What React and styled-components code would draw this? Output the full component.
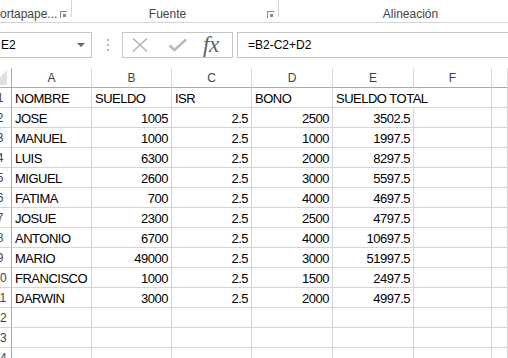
import React from 'react';
import styled, { createGlobalStyle } from 'styled-components';

const GlobalStyle = createGlobalStyle`
  body {
    margin: 0;
    background: #ffffff;
    overflow: hidden;
    font-family: "Liberation Sans", Arial, sans-serif;
  }
`;

const Page = styled.div`
  width: 508px;
  height: 358px;
  overflow: hidden;
  background: #ffffff;
`;

// ribbon (only the bottom labels are visible)
const Ribbon = styled.div`
  display: flex;
  height: 22px;
  border-bottom: 1px solid #d5d5d5;
`;
const RibbonGroup = styled.div`
  position: relative;
  display: flex;
  align-items: center;
  justify-content: ${(props) => (props.$left ? 'flex-start' : 'center')};
  width: ${(props) => props.$width || 'auto'};
  flex: ${(props) => (props.$width ? 'none' : '1')};
  padding-top: 6px;
  box-sizing: border-box;
  font-size: 12px;
  color: #444444;
  &::after {
    content: '';
    display: ${(props) => (props.$sep ? 'block' : 'none')};
    position: absolute;
    right: 0;
    top: 0;
    height: 17px;
    border-right: 1px solid #d5d5d5;
  }
`;
const GroupLabel = styled.span`
  position: relative;
  left: ${(props) => props.$shift || 0}px;
`;
const Launcher = styled.span`
  position: absolute;
  right: ${(props) => props.$right}px;
  top: 11px;
  width: 6px;
  height: 6px;
  border-left: 1px solid #8a8a8a;
  border-top: 1px solid #8a8a8a;
  &::after {
    content: '';
    position: absolute;
    left: 2px;
    top: 2px;
    width: 3px;
    height: 3px;
    background: #8a8a8a;
  }
`;

// formula bar
const FormulaBar = styled.div`
  display: flex;
  align-items: center;
  height: 45px;
  padding-bottom: 1px;
  box-sizing: border-box;
`;
const NameBox = styled.div`
  position: relative;
  display: flex;
  align-items: center;
  width: 93px;
  height: 26px;
  margin-left: -1px;
  border: 1px solid #c6c6c6;
  box-sizing: border-box;
  padding-left: 1px;
  font-size: 12px;
  color: #000;
`;
const DropArrow = styled.span`
  position: absolute;
  right: 6px;
  top: 10px;
  border-left: 4px solid transparent;
  border-right: 4px solid transparent;
  border-top: 4px solid #666666;
`;
const Grip = styled.div`
  display: flex;
  flex-direction: column;
  gap: 3px;
  margin: 0 13px 0 15px;
`;
const GripDot = styled.span`
  width: 2px;
  height: 2px;
  background: #b4b4b4;
`;
const FxBox = styled.div`
  display: flex;
  align-items: center;
  width: 111px;
  height: 26px;
  border: 1px solid #c6c6c6;
  box-sizing: border-box;
  padding-left: 9px;
  gap: 20px;
`;
const FxLabel = styled.span`
  font-family: "Liberation Serif", "Times New Roman", serif;
  font-style: italic;
  font-size: 23px;
  color: #606060;
  margin-left: -4px;
  letter-spacing: -0.5px;
  line-height: 1;
  padding-bottom: 2px;
`;
const FormulaInput = styled.div`
  display: flex;
  align-items: center;
  flex: 1;
  height: 26px;
  margin-left: 4px;
  margin-right: -2px;
  border: 1px solid #c6c6c6;
  box-sizing: border-box;
  padding-left: 10px;
  font-size: 12px;
  color: #000;
`;

// sheet grid
const Sheet = styled.div`
  display: grid;
  grid-template-columns: 12px 80px 80px 80px 81px 81px 78px 1fr;
  grid-auto-rows: 20px;
`;
const Cell = styled.div`
  display: flex;
  align-items: center;
  justify-content: ${(props) => (props.$num ? 'flex-end' : 'flex-start')};
  padding: 1px 3px 0 3px;
  box-sizing: border-box;
  border-right: 1px solid ${(props) => (props.$noRight ? 'transparent' : '#d4d4d4')};
  border-bottom: 1px solid #d4d4d4;
  font-size: 13px;
  letter-spacing: -0.5px;
  color: #000000;
  white-space: nowrap;
  overflow: visible;
`;
const ColHead = styled.div`
  display: flex;
  align-items: center;
  justify-content: center;
  padding-top: 1px;
  box-sizing: border-box;
  border-right: 1px solid #dadada;
  border-bottom: 1px solid #ababab;
  font-size: 12px;
  color: #444444;
`;
const Corner = styled.div`
  box-sizing: border-box;
  border-right: 1px solid #ababab;
  border-bottom: 1px solid #ababab;
  overflow: hidden;
`;
const RowHead = styled.div`
  display: flex;
  align-items: center;
  box-sizing: border-box;
  border-right: 1px solid #ababab;
  border-bottom: 1px solid #d4d4d4;
  overflow: hidden;
  font-size: 12px;
  color: #444444;
`;
const RowNum = styled.span`
  flex: none;
  width: 24px;
  margin-left: -12px;
  text-align: center;
`;

const cols = ['A', 'B', 'C', 'D', 'E', 'F', ''];

const data = [
  ['JOSE', 1005, 2.5, 2500, 3502.5],
  ['MANUEL', 1000, 2.5, 1000, 1997.5],
  ['LUIS', 6300, 2.5, 2000, 8297.5],
  ['MIGUEL', 2600, 2.5, 3000, 5597.5],
  ['FATIMA', 700, 2.5, 4000, 4697.5],
  ['JOSUE', 2300, 2.5, 2500, 4797.5],
  ['ANTONIO', 6700, 2.5, 4000, 10697.5],
  ['MARIO', 49000, 2.5, 3000, 51997.5],
  ['FRANCISCO', 1000, 2.5, 1500, 2497.5],
  ['DARWIN', 3000, 2.5, 2000, 4997.5],
];

const headers = ['NOMBRE', 'SUELDO', 'ISR', 'BONO', 'SUELDO TOTAL'];

function CancelIcon() {
  return (
    <svg width="16" height="14" viewBox="0 0 16 14">
      <path d="M1 0.5 L15 13.5 M15 0.5 L1 13.5" stroke="#b9b9b9" strokeWidth="1.6" fill="none" />
    </svg>
  );
}

function EnterIcon() {
  return (
    <svg width="19" height="14" viewBox="0 0 19 14">
      <path d="M1.5 7.5 L6.5 12 L18 1.5" stroke="#b9b9b9" strokeWidth="2.6" fill="none" />
    </svg>
  );
}

function SelectAll() {
  return (
    <svg width="11" height="19" viewBox="0 0 11 19">
      <polygon points="7,2 7,17 -8,17" fill="#dfdfdf" />
    </svg>
  );
}

function App() {
  const rows = [headers, ...data];
  const emptyRows = [12, 13, 14];

  return (
    <Page>
      <GlobalStyle />
      <Ribbon>
        <RibbonGroup $width="72px" $left $sep>
          <GroupLabel>ortapape...</GroupLabel>
          <Launcher $right={5} />
        </RibbonGroup>
        <RibbonGroup $width="207px" $sep>
          <GroupLabel $shift={-8}>Fuente</GroupLabel>
          <Launcher $right={5} />
        </RibbonGroup>
        <RibbonGroup>
          <GroupLabel $shift={17}>Alineación</GroupLabel>
        </RibbonGroup>
      </Ribbon>

      <FormulaBar>
        <NameBox>
          E2
          <DropArrow />
        </NameBox>
        <Grip>
          <GripDot />
          <GripDot />
          <GripDot />
        </Grip>
        <FxBox>
          <CancelIcon />
          <EnterIcon />
          <FxLabel>fx</FxLabel>
        </FxBox>
        <FormulaInput>=B2-C2+D2</FormulaInput>
      </FormulaBar>

      <Sheet>
        <Corner>
          <SelectAll />
        </Corner>
        {cols.map((c, i) => (
          <ColHead key={'h' + i}>{c}</ColHead>
        ))}

        {rows.map((row, r) => (
          <React.Fragment key={'r' + r}>
            <RowHead>
              <RowNum>{r + 1}</RowNum>
            </RowHead>
            {row.map((val, c) => (
              <Cell
                key={c}
                $num={typeof val === 'number'}
                $noRight={r === 0 && c === 4}
              >
                {val}
              </Cell>
            ))}
            <Cell />
            <Cell />
          </React.Fragment>
        ))}

        {emptyRows.map((n) => (
          <React.Fragment key={'e' + n}>
            <RowHead>
              <RowNum>{n}</RowNum>
            </RowHead>
            {cols.map((c, i) => (
              <Cell key={i} />
            ))}
          </React.Fragment>
        ))}
      </Sheet>
    </Page>
  );
}

export default App;
